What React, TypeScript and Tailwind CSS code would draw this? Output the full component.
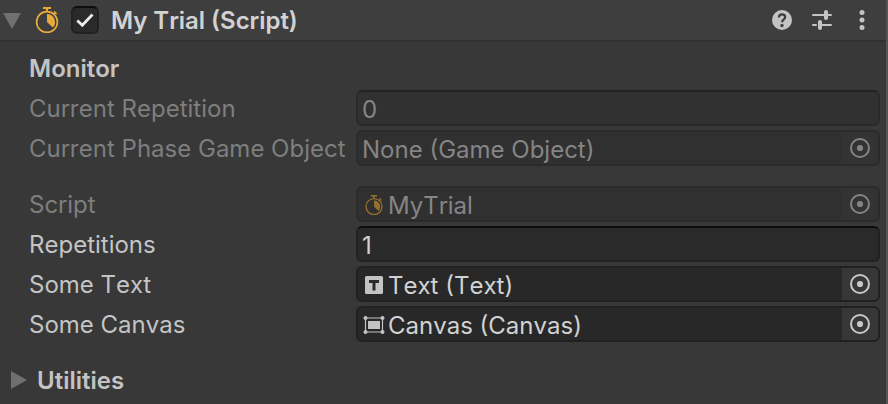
import { useState, type ReactNode } from "react";

function StopwatchIcon({ className }: { className: string }) {
  return (
    <svg viewBox="0 0 24 26" className={className} fill="none" stroke="currentColor" aria-hidden="true">
      <circle cx="12" cy="15" r="10.4" strokeWidth="1.7" />
      <path d="M8 1h8M12 1v4" strokeWidth="2" />
      <path d="M18.6 7.6l2-2M19 4.4l2.6 2.6" strokeWidth="1.6" />
      <path d="M12 15V7A8 8 0 0 1 17.7 20.600Z" fill="currentColor" stroke="none" />
    </svg>
  );
}

function TextIcon() {
  return (
    <svg viewBox="0 0 20 20" className="size-5 shrink-0" aria-hidden="true">
      <rect x="1" y="1" width="18" height="18" rx="1.5" fill="#c4c4c4" />
      <path d="M5 5h10v3h-3.500v7.500h-3V8H5z" fill="#2a2a2a" />
    </svg>
  );
}

function CanvasIcon() {
  return (
    <svg viewBox="0 0 20 20" className="size-5 shrink-0 overflow-visible" fill="#c4c4c4" aria-hidden="true">
      <path d="M1 3h18M1 17h18M1.500 3v14M18.500 3v14" stroke="#c4c4c4" strokeWidth="1.2" />
      <rect x="4" y="6" width="12" height="8" />
      <circle cx="1.500" cy="3" r="2" />
      <circle cx="18.500" cy="3" r="2" />
      <circle cx="1.500" cy="17" r="2" />
      <circle cx="18.500" cy="17" r="2" />
    </svg>
  );
}

function PickerIcon() {
  return (
    <svg viewBox="0 0 20 20" className="size-5" fill="none" stroke="currentColor" aria-hidden="true">
      <circle cx="10" cy="10" r="9" strokeWidth="2" />
      <circle cx="10" cy="10" r="3.1" fill="currentColor" stroke="none" />
    </svg>
  );
}

type RowProps = { id: string; label: string; disabled?: boolean; children: ReactNode };

function Row({ id, label, disabled, children }: RowProps) {
  return (
    <div className="flex h-9 items-center">
      <label htmlFor={id} className={`w-[327px] shrink-0 pt-0.5 whitespace-nowrap ${disabled ? "text-[#7e7e7e]" : "text-[#c4c4c4]"}`}>
        {label}
      </label>
      {children}
    </div>
  );
}

type FieldProps = { id: string; label: string; value: string; disabled?: boolean };

function NumberField({ id, label, value, disabled }: FieldProps) {
  return (
    <Row id={id} label={label} disabled={disabled}>
      <input
        id={id}
        defaultValue={value}
        disabled={disabled}
        inputMode="numeric"
        className={`h-9 min-w-0 flex-1 rounded-md border-2 px-1 pt-0.5 outline-none ${
          disabled
            ? "border-[#2a2a2a] border-t-[#232323] bg-[#313131] text-[#858585]"
            : "border-[#212121] border-t-[#0d0d0d] bg-[#2a2a2a] text-[#d2d2d2]"
        }`}
      />
    </Row>
  );
}

function ObjectField({ id, label, value, disabled, icon }: FieldProps & { icon?: ReactNode }) {
  return (
    <Row id={id} label={label} disabled={disabled}>
      <div
        className={`flex h-9 min-w-0 flex-1 items-center overflow-hidden rounded-md border-2 ${
          disabled ? "border-[#2b2b2b] bg-[#303030] text-[#858585]" : "border-[#202020] bg-[#282828] text-[#d2d2d2]"
        }`}
      >
        {icon && <span className="flex shrink-0 pt-0.5 pl-1.5">{icon}</span>}
        <input id={id} value={value} readOnly disabled={disabled} className="h-8 min-w-0 flex-1 bg-transparent px-1 pt-1 outline-none" />
        <button
          type="button"
          disabled={disabled}
          aria-label={`Select ${label}`}
          className={`flex h-8 w-9 shrink-0 items-center justify-center ${
            disabled ? "bg-[#333333] text-[#838383]" : "bg-[#373737] text-[#c8c8c8]"
          }`}
        >
          <PickerIcon />
        </button>
      </div>
    </Row>
  );
}

export default function App() {
  const [enabled, setEnabled] = useState(true);
  return (
    <main className="min-h-screen border-r-2 border-[#555555] bg-[#383838] font-['Inter',sans-serif] text-2xl leading-8 text-[#c4c4c4] [font-kerning:none]">
      <header className="flex h-[42px] items-center border-b-2 border-[#303030] bg-[#3e3e3e] pr-3.5 pl-[3px]">
        <button type="button" aria-label="Collapse component" className="flex w-8 shrink-0 pt-0.5">
          <svg viewBox="0 0 18 16" className="h-4 w-[18px]" aria-hidden="true">
            <path d="M0 0h18L9 16z" fill="#707070" />
          </svg>
        </button>
        <StopwatchIcon className="h-[26px] w-6 shrink-0 text-[#e9aa3c]" />
        <label className="ml-3 flex items-center gap-3 font-semibold text-[#d2d2d2]">
          <span className="relative flex size-7">
            <input
              type="checkbox"
              checked={enabled}
              onChange={(event) => setEnabled(event.target.checked)}
              className="size-7 appearance-none rounded-md border-2 border-[#212121] border-t-[#0d0d0d] bg-[#2a2a2a]"
            />
            {enabled && (
              <svg viewBox="0 0 28 28" className="pointer-events-none absolute inset-0" fill="none" aria-hidden="true">
                <path d="M6.300 14.500l5 4.700L21.500 8.500" stroke="#ececec" strokeWidth="2.800" />
              </svg>
            )}
          </span>
          <span className="pt-0.5">My Trial (Script)</span>
        </label>
        <div className="ml-auto flex items-center gap-5">
          <button type="button" aria-label="Help">
            <svg viewBox="0 0 20 20" className="size-5" aria-hidden="true">
              <circle cx="10" cy="10" r="10" fill="#c4c4c4" />
              <path d="M6.900 7.600C6.900 5.500 8.200 4.300 10.100 4.300S13.200 5.500 13.200 7.200C13.200 9.300 10.100 9.500 10.100 12.200" fill="none" stroke="#3e3e3e" strokeWidth="2.200" />
              <circle cx="10" cy="15.500" r="1.700" fill="#3e3e3e" />
            </svg>
          </button>
          <button type="button" aria-label="Presets">
            <svg viewBox="0 0 20 20" className="size-5" fill="none" stroke="#c4c4c4" strokeLinecap="round" aria-hidden="true">
              <path d="M1 5h12M16 5h3M1 15h3M9 15h10" strokeWidth="2" />
              <path d="M14 2v6M8 12v6" strokeWidth="4" />
            </svg>
          </button>
          <button type="button" aria-label="More options">
            <svg viewBox="0 0 20 20" className="size-5" fill="#c4c4c4" aria-hidden="true">
              <circle cx="10" cy="2.500" r="2.500" />
              <circle cx="10" cy="10" r="2.500" />
              <circle cx="10" cy="17.500" r="2.500" />
            </svg>
          </button>
        </div>
      </header>

      <div className="pt-2 pr-1.5 pl-[29px]">
        <section className="flex flex-col gap-1">
          <h2 className="flex h-9 items-center pt-0.5 font-semibold">Monitor</h2>
          <NumberField id="current-repetition" label="Current Repetition" value="0" disabled />
          <ObjectField id="current-phase" label="Current Phase Game Object" value="None (Game Object)" disabled />
        </section>
        <section className="mt-5 flex flex-col gap-1">
          <ObjectField
            id="script"
            label="Script"
            value="MyTrial"
            disabled
            icon={<StopwatchIcon className="h-5 w-5 text-[#94702e]" />}
          />
          <NumberField id="repetitions" label="Repetitions" value="1" />
          <ObjectField id="some-text" label="Some Text" value="Text (Text)" icon={<TextIcon />} />
          <ObjectField id="some-canvas" label="Some Canvas" value="Canvas (Canvas)" icon={<CanvasIcon />} />
        </section>
      </div>

      <button type="button" aria-expanded="false" className="mt-5 ml-[11px] flex h-9 items-center gap-2.5 font-semibold">
        <svg viewBox="0 0 16 18" className="h-[18px] w-4" aria-hidden="true">
          <path d="M0 0v18l16-9z" fill="#707070" />
        </svg>
        <span className="pt-0.5">Utilities</span>
      </button>
    </main>
  );
}
